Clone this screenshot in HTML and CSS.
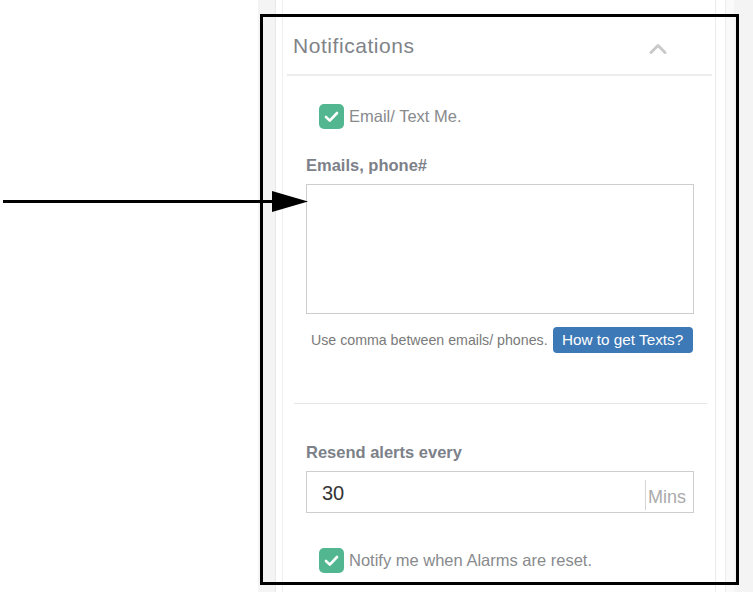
FILE: index.html
```html
<!DOCTYPE html>
<html lang="en">
<head>
  <meta charset="UTF-8">
  <title>Notifications</title>
  <link rel="stylesheet" href="styles.css">
</head>
<body>

  <div class="stage">
    <div class="app">
      <div class="panel">
        <div class="card">
          <div class="card-head">
            <h2>Notifications</h2>
            <svg class="chevron" width="18" height="11" viewBox="0 0 18 11">
              <polyline points="2,9.5 9,2.5 16,9.5" fill="none" stroke="#cacaca" stroke-width="3" stroke-linecap="round" stroke-linejoin="round"/>
            </svg>
          </div>

          <div class="card-body">
            <label class="check">
              <span class="box">
                <svg width="25" height="25" viewBox="0 0 25 25"><polyline points="7,13 10.8,16.6 18,9" fill="none" stroke="#fff" stroke-width="2.6" stroke-linecap="round" stroke-linejoin="round"/></svg>
              </span>
              Email/ Text Me.
            </label>

            <label class="field-label" for="emails">Emails, phone#</label>
            <textarea id="emails"></textarea>

            <div class="help">
              <span>Use comma between emails/ phones.</span>
              <button type="button">How to get Texts?</button>
            </div>
          </div>

          <hr class="sep">

          <div class="card-body">
            <label class="field-label" for="resend">Resend alerts every</label>
            <div class="input-group">
              <input type="text" id="resend" value="30">
              <span class="addon">Mins</span>
            </div>

            <label class="check check-last">
              <span class="box">
                <svg width="25" height="25" viewBox="0 0 25 25"><polyline points="7,13 10.8,16.6 18,9" fill="none" stroke="#fff" stroke-width="2.6" stroke-linecap="round" stroke-linejoin="round"/></svg>
              </span>
              Notify me when Alarms are reset.
            </label>
          </div>
        </div>
      </div>
      <div class="edge"></div>
    </div>

    <!-- annotation drawn over the screenshot -->
    <div class="frame"></div>
    <svg class="arrow" width="753" height="592" viewBox="0 0 753 592">
      <line x1="3" y1="201.5" x2="276" y2="201.5" stroke="#000" stroke-width="3"/>
      <polygon points="272,191 308,201.5 272,212" fill="#000"/>
    </svg>
  </div>

</body>
</html>
```

FILE: styles.css
```css
* {
  margin: 0;
  padding: 0;
  box-sizing: border-box;
}

body {
  font-family: 'Liberation Sans', Arial, sans-serif;
  background-color: #fff;
}

.stage {
  position: relative;
  width: 753px;
  height: 592px;
  overflow: hidden;
}

.app {
  margin-left: 258px;
  height: 592px;
  display: flex;
  padding-left: 17px;
  background-color: #f4f4f4;
}

.panel {
  width: 451px;
  height: 100%;
  padding: 0 9px 0 6px;
  background-color: #fff;
  border-left: 1px solid #e8e8e8;
  border-right: 1px solid #ececec;
}

.edge {
  width: 8px;
  background-color: #fafafa;
}

.card {
  height: 100%;
  border-left: 1px solid #efefef;
  border-right: 1px solid #ebebeb;
}

.card-head {
  margin: 0 3px 0 4px;
  padding: 34px 0 16px 6px;
  border-bottom: 2px solid #ececec;
  display: flex;
  justify-content: space-between;
  align-items: flex-start;
}

.card-head h2 {
  font-size: 21px;
  font-weight: normal;
  line-height: 24px;
  letter-spacing: 0.55px;
  color: #808387;
}

.chevron {
  margin: 9px 45px 0 0;
}

.card-body {
  padding: 28px 21px 0 23px;
  display: flex;
  flex-direction: column;
  align-items: flex-start;
}

.card-body + .sep + .card-body {
  padding-top: 0;
}

.check {
  display: flex;
  align-items: center;
  gap: 5px;
  margin-left: 13px;
  font-size: 16.5px;
  line-height: 25px;
  color: #888a8d;
}

.box {
  width: 25px;
  height: 25px;
  border-radius: 5px;
  background-color: #52b791;
  display: block;
}

.box svg {
  display: block;
}

.field-label {
  display: block;
  margin-top: 26px;
  font-size: 16.5px;
  font-weight: bold;
  line-height: 20px;
  color: #7c8189;
}

.card-body + .sep + .card-body .field-label {
  margin-top: 38px;
}

textarea {
  display: block;
  width: 100%;
  height: 130px;
  margin-top: 9px;
  border: 1px solid #cdcdcd;
  resize: none;
  font-family: inherit;
}

.help {
  margin-top: 13px;
  display: flex;
  align-items: center;
  gap: 5px;
  padding-left: 5px;
  height: 26px;
}

.help span {
  font-size: 14.2px;
  color: #7a7a7a;
}

.help button {
  height: 26px;
  width: 140px;
  padding: 0 6px;
  border: none;
  border-radius: 4px;
  background-color: #3c79b6;
  color: #fff;
  font-family: inherit;
  font-size: 15.3px;
}

.sep {
  margin: 50px 8px 0 11px;
  border: none;
  border-top: 1px solid #e6e6e6;
}

.input-group {
  margin-top: 9px;
  width: 100%;
  height: 42px;
  border: 1px solid #cdcdcd;
  display: flex;
  align-items: center;
}

.input-group input {
  flex: 1;
  min-width: 0;
  height: 100%;
  border: none;
  outline: none;
  padding: 2px 0 0 15px;
  font-family: inherit;
  font-size: 20px;
  color: #333;
}

.addon {
  height: 30px;
  margin-top: 6px;
  line-height: 34px;
  border-left: 1px solid #d5d5d5;
  padding: 0 7px 0 2px;
  font-size: 18px;
  color: #ababab;
}

.check-last {
  margin-top: 35px;
}

.frame {
  position: absolute;
  left: 260px;
  top: 14px;
  width: 479px;
  height: 571px;
  border: 3px solid #000;
}

.arrow {
  position: absolute;
  left: 0;
  top: 0;
  pointer-events: none;
}
```
